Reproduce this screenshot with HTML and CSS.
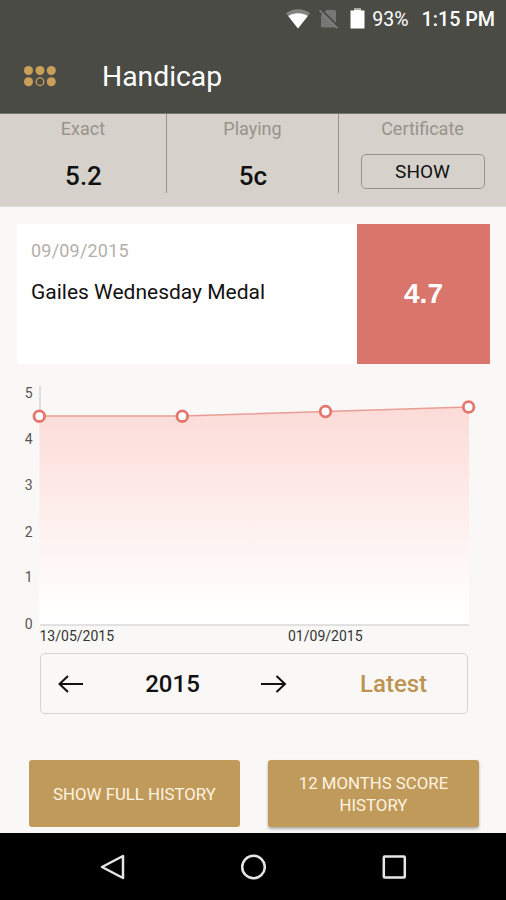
FILE: index.html
```html
<!DOCTYPE html>
<html lang="en">
<head>
    <meta charset="UTF-8">
    <meta name="viewport" content="width=device-width, initial-scale=1.0">
    <title>Handicap</title>
    <link rel="stylesheet" href="styles.css">
</head>
<body>
    <header class="top-bar">
        <div class="status-bar">
            <svg class="wifi" width="26" height="20" viewBox="0 0 26 20">
                <path d="M1 4.200C7.500-1 18.500-1 25 4.200L13 19.500Z" fill="#84847f"/>
                <path d="M3.200 7C9 3.200 17 3.200 22.800 7L13 19.500Z" fill="#fff"/>
            </svg>
            <svg class="sim" width="20" height="20" viewBox="0 0 20 20">
                <path d="M7.500 1H15.500Q17 1 17 2.500V18.500H3.200Q2 18.500 2 17.300V6.500Z" fill="#777773"/>
                <path d="M1.500 .5L19.500 18.500" stroke="#4b4b46" stroke-width="3"/>
                <path d="M.5 1.200L18.500 19.200" stroke="#858581" stroke-width="1.600"/>
            </svg>
            <svg class="battery" width="15" height="21" viewBox="0 0 15 21">
                <path d="M4 0H11V2.500H14.500V20.500H.5V2.500H4Z" fill="#fff"/>
                <path d="M4 0H11V2H4Z" fill="#aaaaa6"/>
            </svg>
            <span class="percent">93%</span>
            <span class="time">1:15 PM</span>
        </div>
        <div class="title-bar">
            <svg class="menu-icon" width="32" height="21" viewBox="0 0 32 21" fill="#c9a05a">
                <circle cx="4.500" cy="4.500" r="4.500"/>
                <circle cx="16" cy="4.500" r="4.500"/>
                <circle cx="27.300" cy="4.500" r="4.500"/>
                <circle cx="4.500" cy="15.700" r="4.500"/>
                <circle cx="16" cy="15.700" r="3.800" fill="none" stroke="#c9a05a" stroke-width="1.300"/>
                <circle cx="27.300" cy="15.700" r="4.500"/>
            </svg>
            <h1>Handicap</h1>
        </div>
    </header>

    <section class="summary">
        <div class="summary-item">
            <div class="summary-label">Exact</div>
            <div class="summary-value">5.2</div>
        </div>
        <div class="summary-item">
            <div class="summary-label">Playing</div>
            <div class="summary-value">5c</div>
        </div>
        <div class="summary-item">
            <div class="summary-label">Certificate</div>
            <button class="show-button">SHOW</button>
        </div>
    </section>

    <main>
        <div class="card">
            <div class="card-info">
                <div class="card-date">09/09/2015</div>
                <div class="card-title">Gailes Wednesday Medal</div>
            </div>
            <div class="card-score">4.7</div>
        </div>

        <svg class="chart" width="506" height="289" viewBox="0 364 506 289">
            <defs>
                <linearGradient id="area" x1="0" y1="407" x2="0" y2="625" gradientUnits="userSpaceOnUse">
                    <stop offset="0" stop-color="#fbdbd8"/>
                    <stop offset=".1" stop-color="#fcdfdc"/>
                    <stop offset=".9" stop-color="#fffefd"/>
                    <stop offset="1" stop-color="#fff"/>
                </linearGradient>
            </defs>
            <path d="M40 386V416" stroke="#d6d6d5" stroke-width="1.500"/>
            <path d="M39.500 416H182L325.500 411.500L469 407V625H39.500Z" fill="url(#area)"/>
            <path d="M40 625H469" stroke="#d9d9d8" stroke-width="1.300"/>
            <path d="M39.500 416H182L325.500 411.500L468.500 407" fill="none" stroke="#e99d96" stroke-width="1.500"/>
            <g fill="#fff" stroke="#e4766d" stroke-width="2.800">
                <circle cx="39.300" cy="416.200" r="5.300"/>
                <circle cx="182.300" cy="416.200" r="5.300"/>
                <circle cx="325.500" cy="411.500" r="5.300"/>
                <circle cx="468.600" cy="407" r="5.300"/>
            </g>
            <g class="axis-y">
                <text x="32.500" y="398">5</text>
                <text x="32.500" y="444">4</text>
                <text x="32.500" y="490">3</text>
                <text x="32.500" y="536.500">2</text>
                <text x="32.500" y="582">1</text>
                <text x="32.500" y="629">0</text>
            </g>
            <g class="axis-x">
                <text x="39.500" y="641">13/05/2015</text>
                <text x="288" y="641">01/09/2015</text>
            </g>
        </svg>

        <div class="year-nav">
            <svg class="arrow" width="26" height="18" viewBox="0 0 26 18">
                <path d="M25 9H1.500M10 1L1.500 9L10 17"/>
            </svg>
            <span class="year">2015</span>
            <svg class="arrow" width="26" height="18" viewBox="0 0 26 18">
                <path d="M0 9H24M15.500 1L24 9L15.500 17"/>
            </svg>
            <a class="latest">Latest</a>
        </div>

        <div class="actions">
            <button class="action">SHOW FULL HISTORY</button>
            <button class="action raised">12 MONTHS SCORE HISTORY</button>
        </div>
    </main>

    <nav class="system-nav">
        <svg width="26" height="26" viewBox="0 0 26 26">
            <path d="M24 2V24L3 13Z"/>
        </svg>
        <svg width="26" height="26" viewBox="0 0 26 26">
            <circle cx="13.500" cy="13" r="11.300"/>
        </svg>
        <svg width="26" height="26" viewBox="0 0 26 26">
            <rect x="2.800" y="2.500" width="21" height="21" rx="1"/>
        </svg>
    </nav>
</body>
</html>
```

FILE: styles.css
```css
* {
    box-sizing: border-box;
}

body {
    margin: 0;
    width: 506px;
    height: 900px;
    display: flex;
    flex-direction: column;
    overflow: hidden;
    background-color: #f9f8f6;
    color: #111;
    font-family: Roboto, sans-serif;
}

svg {
    display: block;
    flex-shrink: 0;
}

button {
    font-family: inherit;
    cursor: pointer;
}

.top-bar {
    height: 114px;
    flex-shrink: 0;
    background-color: #4b4b46;
    border-bottom: 1px solid #77746f;
    color: #fff;
}

.status-bar {
    height: 38px;
    display: flex;
    align-items: center;
    justify-content: flex-end;
    padding-right: 11px;
}

.sim {
    margin-left: 8px;
}

.battery {
    margin-left: 11px;
    margin-top: -1px;
}

.percent {
    margin-left: 7px;
    font-size: 19.5px;
}

.time {
    margin-left: 13px;
    font-size: 19.7px;
    font-weight: 500;
}

.title-bar {
    height: 76px;
    display: flex;
    align-items: center;
    padding-left: 24px;
}

h1 {
    margin: 0 0 0 46px;
    font-size: 28.3px;
    font-weight: 400;
}

.summary {
    height: 93px;
    flex-shrink: 0;
    display: grid;
    grid-template-columns: 167px 172px 167px;
    background-color: #d6d1cb;
    border-bottom: 1px solid #e2ded9;
}

.summary-item {
    height: 79px;
    display: flex;
    flex-direction: column;
    align-items: center;
    border-right: 1px solid #96928d;
}

.summary-item:last-child {
    border-right: none;
}

.summary-label {
    margin-top: 4px;
    line-height: 22px;
    font-size: 18px;
    color: #98938b;
}

.summary-value {
    margin-top: 20px;
    padding-left: 1px;
    line-height: 32px;
    font-size: 26px;
    font-weight: 500;
}

.show-button {
    width: 124px;
    height: 35px;
    margin-top: 14px;
    padding: 0;
    border: 1px solid #96928d;
    border-radius: 5px;
    background: none;
    color: #111;
    font-size: 19px;
}

.card {
    display: flex;
    height: 140px;
    margin: 17px 16px 0 17px;
    background-color: #fff;
}

.card-info {
    flex: 1;
    padding: 16px 14px;
}

.card-date {
    line-height: 22px;
    font-size: 18px;
    letter-spacing: 0.2px;
    color: #b5afa9;
}

.card-title {
    margin-top: 16px;
    line-height: 28px;
    font-size: 21px;
}

.card-score {
    width: 133px;
    display: flex;
    align-items: center;
    justify-content: center;
    background-color: #d9756b;
    color: #fff;
    font-family: "Liberation Sans", Arial, sans-serif;
    font-size: 28px;
    font-weight: 700;
}

.axis-y {
    font-size: 14px;
    fill: #555;
    text-anchor: end;
}

.axis-x {
    font-size: 14px;
    fill: #333;
}

.year-nav {
    display: flex;
    align-items: center;
    width: 428px;
    height: 61px;
    margin-left: 40px;
    padding-left: 17px;
    border: 1px solid #d3d3d2;
    border-radius: 5px;
    font-size: 24px;
    font-weight: 500;
}

.arrow {
    fill: none;
    stroke: #111;
    stroke-width: 2;
}

.year {
    width: 177px;
    text-align: center;
}

.latest {
    margin-left: 73px;
    color: #bd944f;
}

.actions {
    display: flex;
    gap: 28px;
    margin: 46px 27px 0 29px;
}

.action {
    width: 211px;
    height: 67px;
    padding: 0 20px;
    border: none;
    border-radius: 3px;
    background-color: #c09a5b;
    color: #fff4e0;
    font-size: 16.8px;
    line-height: 22px;
}

.raised {
    box-shadow: 0 2px 3px rgba(0, 0, 0, 0.3);
}

.system-nav {
    height: 67px;
    flex-shrink: 0;
    margin-top: auto;
    display: flex;
    align-items: center;
    justify-content: center;
    gap: 115px;
    background-color: #000;
}

.system-nav svg {
    fill: none;
    stroke: #e6e6e6;
    stroke-width: 2.5;
    stroke-linejoin: round;
}
```
